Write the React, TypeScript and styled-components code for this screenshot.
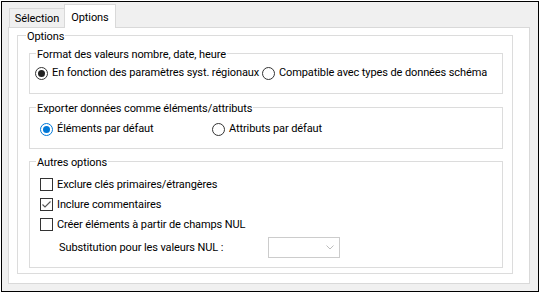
import styled, { createGlobalStyle } from 'styled-components'

const GlobalStyle = createGlobalStyle`
  body {
    margin: 0;
    background: #fff;
    font-family: Roboto, "Liberation Sans", sans-serif;
    font-size: 11px;
    letter-spacing: -0.1px;
    color: #000;
  }
`

export default function App() {
  return (
    <>
      <GlobalStyle />
      <Frame>
        <TabStrip>
          <Tab>Sélection</Tab>
          <Tab $active>Options</Tab>
        </TabStrip>
        <Panel>
          <GroupBox $pad="3px 9px 5px 11px" $grow>
            <Caption $shift={-3}>Options</Caption>

            <GroupBox $pad="4px 0 12px 5px">
              <Caption $shift={1}>Format des valeurs nombre, date, heure</Caption>
              <ChoiceRow $first={227}>
                <Choice>
                  <Radio $on="dark">
                    <Dot $on="dark" />
                  </Radio>
                  En fonction des paramètres syst. régionaux
                </Choice>
                <Choice>
                  <Radio />
                  Compatible avec types de données schéma
                </Choice>
              </ChoiceRow>
            </GroupBox>

            <GroupBox $pad="6px 0 11px 10px" $gap={6}>
              <Caption $shift={-4}>Exporter données comme éléments/attributs</Caption>
              <ChoiceRow $first={172}>
                <Choice>
                  <Radio $on="blue">
                    <Dot $on="blue" />
                  </Radio>
                  Éléments par défaut
                </Choice>
                <Choice>
                  <Radio />
                  Attributs par défaut
                </Choice>
              </ChoiceRow>
            </GroupBox>

            <GroupBox $pad="5px 0 9px 10px" $gap={5}>
              <Caption $shift={-4}>Autres options</Caption>
              <CheckRow>
                <Box />
                Exclure clés primaires/étrangères
              </CheckRow>
              <CheckRow>
                <Box>
                  <svg width="11" height="11" viewBox="0 0 11 11">
                    <path d="M1.5 5.5 L4 8 L9.5 2.5" fill="none" stroke="#555" strokeWidth="1.1" />
                  </svg>
                </Box>
                Inclure commentaires
              </CheckRow>
              <CheckRow>
                <Box />
                Créer éléments à partir de champs NUL
              </CheckRow>
              <SubstRow>
                <SubstLabel>Substitution pour les valeurs NUL :</SubstLabel>
                <Combo>
                  <svg width="8" height="5" viewBox="0 0 8 5">
                    <path d="M0.5 0.5 L4 4 L7.5 0.5" fill="none" stroke="#bdbdbd" strokeWidth="1" />
                  </svg>
                </Combo>
              </SubstRow>
            </GroupBox>
          </GroupBox>
        </Panel>
      </Frame>
    </>
  )
}

const Frame = styled.div`
  box-sizing: border-box;
  width: 538px;
  height: 291px;
  margin: 1px 0 0 1px;
  border: 1px solid #000;
  background: #f0f0f0;
  padding: 0 8px 7px 6px;
  display: flex;
  flex-direction: column;
`

const TabStrip = styled.div`
  display: flex;
  align-items: flex-end;
  height: 25px;
  padding-left: 1px;
  position: relative;
  z-index: 1;
`

const Tab = styled.div<{ $active?: boolean }>`
  box-sizing: border-box;
  display: flex;
  align-items: center;
  justify-content: center;
  width: ${(p) => (p.$active ? 52 : 55)}px;
  height: ${(p) => (p.$active ? 24 : 19)}px;
  margin-bottom: ${(p) => (p.$active ? -1 : 0)}px;
  padding-top: ${(p) => (p.$active ? 1 : 0)}px;
  background: ${(p) => (p.$active ? '#fff' : '#f0f0f0')};
  border: 1px solid #d9d9d9;
  border-bottom: none;
  border-right: ${(p) => (p.$active ? '1px solid #d9d9d9' : 'none')};
`

const Panel = styled.div`
  box-sizing: border-box;
  flex: 1;
  display: flex;
  flex-direction: column;
  background: #fff;
  border: 1px solid #d9d9d9;
  padding: 0 16px 9px 8px;
`

const GroupBox = styled.fieldset<{ $pad: string; $gap?: number; $grow?: boolean }>`
  margin: ${(p) => p.$gap ?? 0}px 0 0 0;
  min-width: 0;
  flex: ${(p) => (p.$grow ? 1 : 'none')};
  border: 1px solid #dcdcdc;
  padding: ${(p) => p.$pad};
  display: flex;
  flex-direction: column;
`

const Caption = styled.legend<{ $shift: number }>`
  padding: 3px 1px 0;
  margin-left: ${(p) => p.$shift}px;
  line-height: 12px;
`

const ChoiceRow = styled.div<{ $first: number }>`
  display: grid;
  grid-template-columns: ${(p) => p.$first}px auto;
  height: 16px;
  align-items: center;
`

const Choice = styled.label`
  display: flex;
  align-items: center;
  gap: 4px;
  white-space: nowrap;
  line-height: 16px;
`

const Radio = styled.span<{ $on?: 'dark' | 'blue' }>`
  box-sizing: border-box;
  width: 13px;
  height: 13px;
  border-radius: 50%;
  border: 1px solid ${(p) => (p.$on === 'blue' ? '#0078d7' : '#333')};
  background: #fff;
  display: flex;
  align-items: center;
  justify-content: center;
  flex: none;
`

const Dot = styled.span<{ $on: 'dark' | 'blue' }>`
  width: 7px;
  height: 7px;
  border-radius: 50%;
  background: ${(p) => (p.$on === 'blue' ? '#0078d7' : '#222')};
`

const CheckRow = styled.label`
  display: flex;
  align-items: center;
  gap: 4px;
  height: 20px;
  white-space: nowrap;
`

const Box = styled.span`
  box-sizing: border-box;
  width: 13px;
  height: 13px;
  border: 1px solid #333;
  background: #fff;
  display: flex;
  align-items: center;
  justify-content: center;
  flex: none;
`

const SubstRow = styled.div`
  display: flex;
  align-items: center;
  margin-top: 3px;
  padding-left: 19px;
`

const SubstLabel = styled.span`
  width: 209px;
  white-space: nowrap;
`

const Combo = styled.div`
  box-sizing: border-box;
  width: 72px;
  height: 21px;
  border: 1px solid #cccccc;
  background: #fff;
  display: flex;
  align-items: center;
  justify-content: flex-end;
  padding-right: 5px;
`
